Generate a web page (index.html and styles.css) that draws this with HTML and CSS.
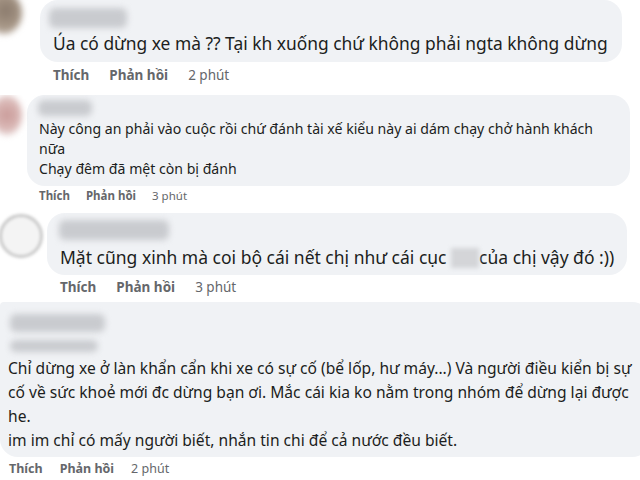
FILE: index.html
```html
<!DOCTYPE html>
<html lang="vi">
<head>
<meta charset="utf-8">
<link rel="stylesheet" href="styles.css">
</head>
<body>
<div class="shot s1">
  <div class="avatar av1"></div>
  <div class="col">
    <div class="bubble">
      <div class="name n1"></div>
      <div class="text">Úa có dừng xe mà ?? Tại kh xuống chứ không phải ngta không dừng</div>
    </div>
    <div class="actions"><b>Thích</b><b>Phản hồi</b><span>2 phút</span></div>
  </div>
</div>
<div class="shot s2">
  <div class="avatar av2"></div>
  <div class="col">
    <div class="bubble">
      <div class="name n2"></div>
      <div class="text">Này công an phải vào cuộc rồi chứ đánh tài xế kiểu này ai dám chạy chở hành khách<br>nữa<br>Chạy đêm đã mệt còn bị đánh</div>
    </div>
    <div class="actions"><b>Thích</b><b>Phản hồi</b><span>3 phút</span></div>
  </div>
</div>
<div class="shot s3">
  <div class="avatar av3"></div>
  <div class="col">
    <div class="bubble">
      <div class="name n3"></div>
      <div class="text">Mặt cũng xinh mà coi bộ cái nết chị như cái cục <span class="hide"></span>của chị vậy đó :))</div>
    </div>
    <div class="actions"><b>Thích</b><b>Phản hồi</b><span>3 phút</span></div>
  </div>
</div>
<div class="shot s4">
  <div class="col">
    <div class="bubble">
      <div class="name n4a"></div>
      <div class="name n4b"></div>
      <div class="text">Chỉ dừng xe ở làn khẩn cẩn khi xe có sự cố (bể lốp, hư máy...) Và người điều kiển bị sự<br>cố về sức khoẻ mới đc dừng bạn ơi. Mắc cái kia ko nằm trong nhóm để dừng lại được<br>he.<br>im im chỉ có mấy người biết, nhắn tin chi để cả nước đều biết.</div>
    </div>
    <div class="actions"><b>Thích</b><b>Phản hồi</b><span>2 phút</span></div>
  </div>
</div>
</body>
</html>
```
FILE: styles.css
```css
html, body {
  margin: 0;
  padding: 0;
  background: #ffffff;
  width: 640px;
  height: 480px;
  overflow: hidden;
}
body {
  font-family: "Noto Sans", "Open Sans", sans-serif;
  color: #1c1e21;
}
.shot {
  display: flex;
  align-items: flex-start;
  overflow: hidden;
  box-sizing: border-box;
}
.col {
  display: flex;
  flex-direction: column;
}
.bubble {
  background: #f0f2f5;
  border-radius: 18px;
  box-sizing: border-box;
}
.text { white-space: nowrap; }
.name {
  background: #c9cbcf;
  border-radius: 6px;
  filter: blur(3px);
}
.avatar {
  flex: none;
  border-radius: 50%;
  filter: blur(3px);
}
.actions {
  display: flex;
  color: #65676b;
}
.actions b { font-weight: 700; }
.actions span { font-weight: 400; }

/* shot 1 */
.s1 { height: 95px; }
.av1 {
  width: 36px; height: 42px;
  margin: -8px 18px 0 -14px;
  background: radial-gradient(circle at 55% 45%, #8a7a6c 0%, #a89888 55%, #d8d0c8 100%);
}
.s1 .bubble { width: 582px; height: 62px; padding: 8px 0 0 9px; }
.n1 { width: 78px; height: 20px; }
.s1 .text { font-size: 17.4px; line-height: 24px; margin: 3px 0 0 4px; }
.s1 .actions { font-size: 13.5px; line-height: 18px; margin: 4px 0 0 13px; gap: 20px; }

/* shot 2 */
.s2 { height: 112px; }
.av2 {
  width: 30px; height: 40px;
  margin: 0 5px 0 -8px;
  background: radial-gradient(circle at 50% 50%, #c99a98 0%, #dcbcba 60%, #eee 100%);
}
.s2 .bubble { width: 603px; height: 91px; padding: 5px 0 0 11px; }
.n2 { width: 54px; height: 16px; }
.s2 .text { font-size: 14.1px; line-height: 20px; margin: 3px 0 0 1px; }
.s2 .actions { font-size: 11.5px; line-height: 16px; margin: 2px 0 0 12px; gap: 16px; }

/* shot 3 */
.s3 { height: 93px; padding-top: 6px; }
.av3 {
  width: 44px; height: 44px;
  margin: 1px 4px 0 -1px;
  box-sizing: border-box;
  border: 3px solid #c9c9c9;
  background: #f4f4f4;
  filter: blur(1.5px);
}
.s3 .bubble { width: 580px; height: 62px; padding: 7px 0 0 12px; }
.n3 { width: 110px; height: 20px; }
.s3 .text { font-size: 17.5px; line-height: 24px; margin: 5px 0 0 1px; }
.hide {
  display: inline-block;
  width: 28px; height: 20px;
  vertical-align: -4px;
  background: #d4d5d8;
  filter: blur(2px);
}
.s3 .actions { font-size: 13.5px; line-height: 18px; margin: 3px 0 0 13px; gap: 20px; }

/* shot 4 */
.s4 { height: 180px; padding-top: 2px; }
.s4 .bubble { width: 650px; height: 155px; padding: 12px 0 0 10px; border-top-left-radius: 4px; }
.n4a { width: 95px; height: 18px; }
.n4b { width: 88px; height: 12px; margin-top: 8px; }
.s4 .text { font-size: 15.6px; line-height: 24px; margin: 4px 0 0 -2px; }
.s4 .actions { font-size: 12.5px; line-height: 18px; margin: 3px 0 0 9px; gap: 17px; }
```
